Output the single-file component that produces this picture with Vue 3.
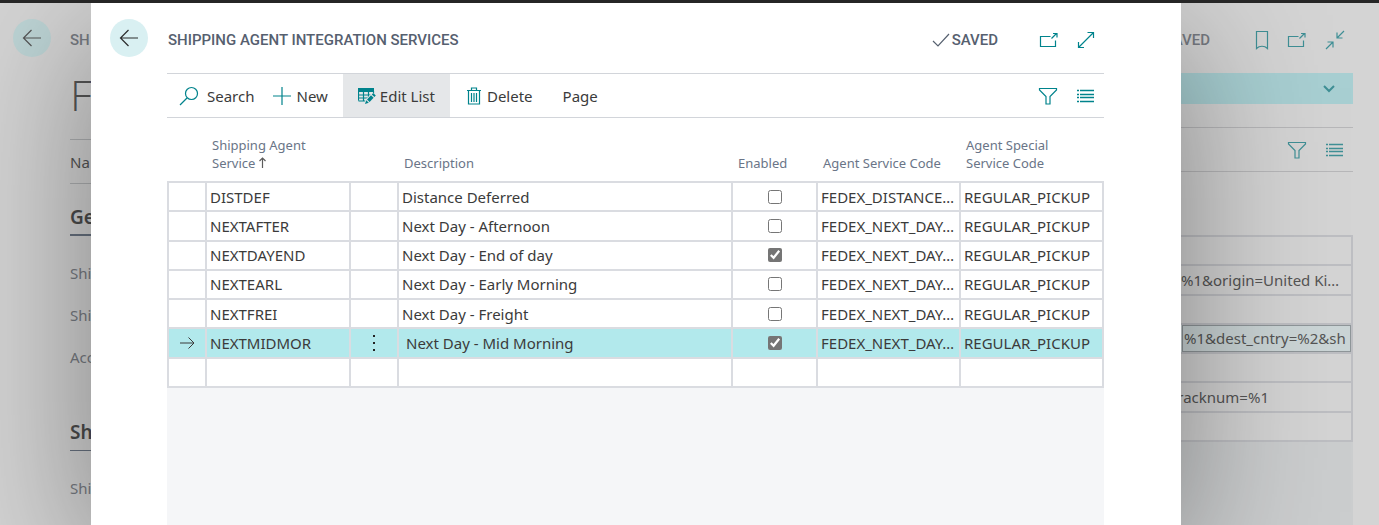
<script setup>
import { ref } from 'vue'

const rows = ref([
  { code: 'DISTDEF', description: 'Distance Deferred', enabled: false, service: 'FEDEX_DISTANCE…', special: 'REGULAR_PICKUP' },
  { code: 'NEXTAFTER', description: 'Next Day - Afternoon', enabled: false, service: 'FEDEX_NEXT_DAY…', special: 'REGULAR_PICKUP' },
  { code: 'NEXTDAYEND', description: 'Next Day - End of day', enabled: true, service: 'FEDEX_NEXT_DAY…', special: 'REGULAR_PICKUP' },
  { code: 'NEXTEARL', description: 'Next Day - Early Morning', enabled: false, service: 'FEDEX_NEXT_DAY…', special: 'REGULAR_PICKUP' },
  { code: 'NEXTFREI', description: 'Next Day - Freight', enabled: false, service: 'FEDEX_NEXT_DAY…', special: 'REGULAR_PICKUP' },
  { code: 'NEXTMIDMOR', description: 'Next Day - Mid Morning', enabled: true, service: 'FEDEX_NEXT_DAY…', special: 'REGULAR_PICKUP' }
])
const selected = ref('NEXTMIDMOR')
const urls = ['', '%1&origin=United Ki…', '', '%1&dest_cntry=%2&sh', '', 'tracknum=%1', '']
</script>

<template>
  <div class="app">
    <div class="topbar"></div>
    <div class="stage">
      <aside class="under under-left">
        <div class="left-head">
          <button class="back" aria-label="Back to list">
            <svg width="20" height="18" viewBox="0 0 20 18"><path d="M19 9H2M9.500 1 1.500 9l8 8" /></svg>
          </button>
          <span class="caption">SH</span>
        </div>
        <div class="left-body">
          <div class="record">F</div>
          <div class="menu">Na</div>
          <h2 class="group strong">Ge</h2>
          <div class="fields">
            <span>Shi</span>
            <span>Shi</span>
            <span>Acc</span>
          </div>
          <h2 class="group">Sh</h2>
          <div class="fields"><span>Shi</span></div>
        </div>
      </aside>

      <main class="dialog">
        <header class="head">
          <button class="back" aria-label="Back">
            <svg width="20" height="18" viewBox="0 0 20 18"><path d="M19 9H2M9.500 1 1.500 9l8 8" /></svg>
          </button>
          <h1 class="caption">SHIPPING AGENT INTEGRATION SERVICES</h1>
          <span class="saved">
            <svg width="18" height="14" viewBox="0 0 18 14"><path d="M1 8l5 5L17 1" /></svg>SAVED
          </span>
          <button class="icon" aria-label="Open in new window">
            <svg width="20" height="18" viewBox="0 0 20 18"><path d="M11.500 5.500H1.500v10h15v-6M12.500 7.500l5-5M14 2.500h4v4" /></svg>
          </button>
          <button class="icon" aria-label="Expand">
            <svg width="18" height="18" viewBox="0 0 18 18"><path d="M2 16 16 2M10.500 1.500h6V7M1.500 11v5.500H7" /></svg>
          </button>
        </header>

        <section class="content">
          <nav class="toolbar">
            <button class="tool search">
              <svg width="20" height="20" viewBox="0 0 20 20"><circle cx="12.500" cy="7.500" r="6" /><path d="M8 12 1 19" /></svg>Search
            </button>
            <button class="tool new">
              <svg width="18" height="18" viewBox="0 0 18 18"><path d="M9 0v18M0 9h18" /></svg>New
            </button>
            <button class="tool active">
              <svg width="18" height="18" viewBox="0 0 18 18">
                <path class="fill" d="M0 1h16v4H0z" />
                <path d="M.500 1.500v12M.500 8h15M.500 11h11M.500 14h9M5.500 5v9M10.500 5v7M15.500 4v4" />
                <path class="halo" d="m6.500 17.500 1.500-4.500 6.500-7 3.500 3-7 7z" />
                <path class="fill" d="m7 17 1.200-3.800 2.600 2.600zM9 12.400l4-4.200 2.600 2.600-4 4.200zM13.800 7.400l1.400-1.400 2.600 2.600-1.400 1.400z" />
              </svg>Edit List
            </button>
            <button class="tool delete">
              <svg width="14" height="18" viewBox="0 0 14 18"><path d="M0 3.500h14M4.500 3V1h5v2M1.500 4v13h11V4M4.500 6v9M7 6v9M9.500 6v9" /></svg>Delete
            </button>
            <button class="tool page">Page</button>
            <span class="spacer"></span>
            <button class="icon" aria-label="Filter">
              <svg width="20" height="18" viewBox="0 0 20 18"><path d="M1.500 1.500h17V3l-6.500 6.500V17H8V9.500L1.500 3z" /></svg>
            </button>
            <button class="icon list" aria-label="Show as list">
              <svg width="17" height="14" viewBox="0 0 17 14"><path d="M0 1.500h2M3 1.500h14M0 5.500h2M3 5.500h14M0 8.500h2M3 8.500h14M0 12.500h2M3 12.500h14" /></svg>
            </button>
          </nav>

          <table class="grid">
            <colgroup>
              <col class="c-mark" /><col class="c-code" /><col class="c-more" /><col />
              <col class="c-enabled" /><col class="c-service" /><col class="c-service" />
            </colgroup>
            <thead>
              <tr>
                <th></th>
                <th scope="col">Shipping Agent<br />Service
                  <svg class="sort" width="7" height="11" viewBox="0 0 7 11"><path d="M3.500 11V1M.500 4l3-3 3 3" /></svg>
                </th>
                <th></th>
                <th scope="col">Description</th>
                <th scope="col">Enabled</th>
                <th scope="col">Agent Service Code</th>
                <th scope="col">Agent Special<br />Service Code</th>
              </tr>
            </thead>
            <tbody>
              <tr v-for="row in rows" :key="row.code" :class="{ current: row.code === selected }" @click="selected = row.code">
                <td class="mark">
                  <svg v-if="row.code === selected" width="15" height="12" viewBox="0 0 15 12"><path d="M0 6h14M8.500 .500 14 6l-5.500 5.500" /></svg>
                </td>
                <td>{{ row.code }}</td>
                <td class="mark">
                  <button v-if="row.code === selected" class="more" aria-label="More options">
                    <svg width="4" height="18" viewBox="0 0 4 18"><path d="M1 1h2v2H1zM1 8h2v2H1zM1 15h2v2H1z" /></svg>
                  </button>
                </td>
                <td class="desc">{{ row.description }}</td>
                <td class="mark"><input v-model="row.enabled" type="checkbox" :aria-label="'Enabled ' + row.code" /></td>
                <td>{{ row.service }}</td>
                <td>{{ row.special }}</td>
              </tr>
              <tr><td v-for="n in 7" :key="n"></td></tr>
            </tbody>
          </table>
          <div class="rest"></div>
        </section>
      </main>

      <aside class="under under-right">
        <div class="right-head">
          <span class="saved">SAVED</span>
          <button class="icon" aria-label="Bookmark">
            <svg width="14" height="20" viewBox="0 0 14 20"><path d="M1.500 1.500h11v17c-3-3-8-3-11 0z" /></svg>
          </button>
          <button class="icon" aria-label="Open page in new window">
            <svg width="20" height="18" viewBox="0 0 20 18"><path d="M11.500 5.500H1.500v10h15v-6M12.500 7.500l5-5M14 2.500h4v4" /></svg>
          </button>
          <button class="icon" aria-label="Collapse">
            <svg width="20" height="20" viewBox="0 0 20 20"><path d="M19 1l-7 7M12 2.500V8h5.500M1 19l7-7M2.500 12H8v5.500" /></svg>
          </button>
        </div>
        <div class="notice">
          <button class="icon" aria-label="Show notifications">
            <svg width="12" height="8" viewBox="0 0 12 8"><path class="thick" d="m1 1 5 5 5-5" /></svg>
          </button>
        </div>
        <div class="right-tools">
          <button class="icon" aria-label="Filter page">
            <svg width="20" height="18" viewBox="0 0 20 18"><path d="M1.500 1.500h17V3l-6.500 6.500V17H8V9.500L1.500 3z" /></svg>
          </button>
          <button class="icon list" aria-label="Show page as list">
            <svg width="17" height="14" viewBox="0 0 17 14"><path d="M0 1.500h2M3 1.500h14M0 5.500h2M3 5.500h14M0 8.500h2M3 8.500h14M0 12.500h2M3 12.500h14" /></svg>
          </button>
        </div>
        <table class="urls">
          <tbody>
            <tr v-for="(url, i) in urls" :key="i">
              <td :class="{ focus: i === 3, tail: i === 5 }"><span>{{ url }}</span></td>
            </tr>
          </tbody>
        </table>
        <div class="right-rest"></div>
      </aside>
    </div>
  </div>
</template>

<style>
body {
  margin: 0;
}
</style>

<style scoped>
.app {
  display: flex;
  flex-direction: column;
  height: 100vh;
  overflow: hidden;
  font-family: "Noto Sans", "Open Sans", sans-serif;
  font-size: 15px;
  color: #3b3b3b;
  background: #d4d4d4;
}
.app * {
  box-sizing: border-box;
}
.topbar {
  position: relative;
  z-index: 2;
  flex: none;
  height: 3px;
  background: #262626;
}
.stage {
  flex: 1;
  min-height: 0;
  display: grid;
  grid-template-columns: 91px minmax(0, 1fr) 198px;
}
button {
  font: inherit;
  color: inherit;
  border: 0;
  padding: 0;
  background: none;
}
svg {
  display: block;
  flex: none;
  fill: none;
  stroke: currentColor;
  stroke-width: 1.2;
}
.back {
  display: flex;
  align-items: center;
  justify-content: center;
  flex: none;
  width: 38px;
  height: 38px;
  border-radius: 50%;
  background: #d9f0f2;
  color: #2d2d2d;
}
.caption,
.saved {
  margin: 0;
  padding-top: 4px;
  font-family: Roboto, sans-serif;
  font-size: 15px;
  font-weight: 500;
  line-height: 20px;
  color: #56606f;
  white-space: nowrap;
}
.icon {
  display: flex;
  color: #00838c;
}

/* Dialog */
.dialog {
  position: relative;
  z-index: 1;
  display: flex;
  flex-direction: column;
  min-height: 0;
  padding: 16px 77px 0 19px;
  background: #fff;
  box-shadow: 0 36px 140px rgba(0, 0, 0, 0.4);
}
.head {
  display: flex;
  align-items: center;
  height: 38px;
}
.head .caption {
  flex: 1;
  margin-left: 20px;
}
.head .saved {
  display: flex;
  align-items: center;
  gap: 2px;
  margin-right: 41px;
}
.head .icon {
  padding-top: 4px;
}
.head .icon + .icon {
  margin: 0 9px 0 18px;
}
.content {
  flex: 1;
  display: flex;
  flex-direction: column;
  min-height: 0;
  margin: 16px 0 0 57px;
}
.toolbar {
  flex: none;
  display: flex;
  align-items: center;
  height: 45px;
  border-top: 1px solid #d2d5da;
  border-bottom: 1px solid #d2d5da;
}
.tool {
  display: flex;
  align-items: center;
  gap: 6px;
  height: 43px;
  white-space: nowrap;
}
.tool svg {
  color: #00838c;
}
.tool .fill {
  fill: currentColor;
  stroke: none;
}
.tool .halo {
  fill: #e5e7e9;
  stroke: #e5e7e9;
}
.search {
  gap: 8px;
  margin-left: 12px;
}
.new {
  gap: 5px;
  margin-left: 19px;
}
.active {
  gap: 4px;
  margin-left: 15px;
  padding: 0 15px;
  background: #e5e7e9;
}
.delete {
  margin-left: 17px;
}
.page {
  margin-left: 30px;
}
.spacer {
  flex: 1;
}
.toolbar .list {
  margin: 0 10px 0 19px;
}
.list svg {
  stroke-width: 1.4;
}

/* Service grid */
.grid,
.urls {
  flex: none;
  border-collapse: collapse;
  table-layout: fixed;
  width: 100%;
}
.c-mark { width: 38px; }
.c-code { width: 144px; }
.c-more { width: 48px; }
.c-enabled { width: 85px; }
.c-service { width: 143px; }
.grid {
  height: 270px;
}
th {
  height: 64px;
  padding: 0 6px 9px;
  vertical-align: bottom;
  text-align: left;
  font-size: 13px;
  font-weight: 400;
  line-height: 18px;
  color: #6a7587;
  white-space: nowrap;
}
.sort {
  display: inline-block;
  color: #5c5c5c;
}
td {
  height: 29px;
  padding: 0 3px;
  border: 2px solid #dadce1;
  line-height: 20px;
  white-space: nowrap;
  overflow: hidden;
}
.grid td {
  background: #fff;
}
.grid .mark {
  padding: 0;
  text-align: center;
}
.mark svg {
  margin: 0 auto;
  stroke-width: 1;
}
.grid .current td {
  background: #b2e9ec;
}
.current .desc {
  padding-left: 7px;
}
.more {
  display: block;
  margin: 0 auto;
}
.more path {
  fill: #222;
  stroke: none;
}
input {
  display: block;
  width: 14px;
  height: 14px;
  margin: 0 auto;
  accent-color: #757575;
}
.rest {
  flex: 1;
  background: #f5f6f8;
}

/* Page beneath, left side */
.under {
  min-width: 0;
  overflow: hidden;
  color: #555;
}
.under-left {
  padding: 16px 0 0 13px;
}
.left-head {
  display: flex;
  align-items: center;
  gap: 19px;
}
.under .back {
  background: #bdd4d5;
  color: #555;
}
.under .caption,
.under .saved {
  color: #777b82;
}
.left-body {
  margin-left: 57px;
}
.record {
  height: 82px;
  padding-top: 11px;
  font-family: "Open Sans", sans-serif;
  font-size: 43px;
  font-weight: 300;
  line-height: 54px;
}
.menu {
  height: 45px;
  border-top: 1px solid #aeb0b2;
  border-bottom: 1px solid #aeb0b2;
  line-height: 45px;
}
.group {
  height: 52px;
  margin: 0;
  padding-top: 20px;
  border-bottom: 1px solid #687280;
  font-size: 19px;
  font-weight: 600;
  line-height: 26px;
  color: #4c4c4c;
}
.group.strong {
  border-bottom-width: 2px;
}
.fields {
  display: flex;
  flex-direction: column;
  gap: 22px;
  padding: 27px 0 32px;
  line-height: 20px;
  color: #777b82;
}

/* Page beneath, right side */
.under-right {
  display: flex;
  flex-direction: column;
  padding: 0 26px 0 0;
}
.under .icon {
  color: #3f8f95;
}
.right-head {
  flex: none;
  display: flex;
  align-items: center;
  justify-content: flex-end;
  height: 70px;
  padding: 4px 8px 0 0;
}
.right-head .saved {
  padding-top: 0;
  margin-right: 45px;
}
.right-head .icon + .icon {
  margin-left: 18px;
}
.notice {
  flex: none;
  display: flex;
  align-items: center;
  justify-content: flex-end;
  height: 31px;
  padding-right: 18px;
  background: #a8cfd2;
}
.thick {
  stroke-width: 2;
}
.right-tools {
  flex: none;
  display: flex;
  align-items: center;
  justify-content: flex-end;
  gap: 19px;
  height: 45px;
  margin: 23px 0 63px;
  padding-right: 10px;
  border-top: 1px solid #b7b7b9;
  border-bottom: 1px solid #b7b7b9;
}
.urls {
  height: 207px;
}
.urls td {
  border-color: #bdbec2;
  border-left: 0;
  padding: 0;
}
.urls span {
  display: flex;
}
.urls .focus {
  padding-left: 3px;
  background: #cbd5d6;
  outline: 1px solid #8f9699;
  outline-offset: -2px;
}
.urls .tail span {
  justify-content: flex-end;
  padding-right: 82px;
}
.right-rest {
  flex: 1;
  background: #cbcdce;
}
</style>
